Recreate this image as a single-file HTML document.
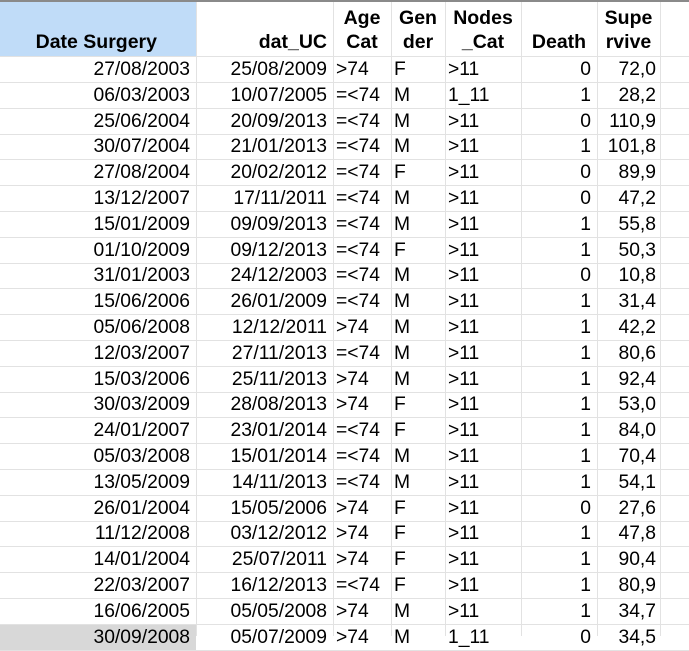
<!DOCTYPE html>
<html><head><meta charset="utf-8"><style>
body{margin:0;width:689px;height:636px;overflow:hidden;background:#fff;font-family:"Liberation Sans",Arial,sans-serif;position:relative}
.top{position:absolute;left:0;top:0;width:689px;height:2px;background:#8a8a8a}
.row{position:absolute;left:0;width:689px;height:26px;border-bottom:1px solid #e2e2e2;box-sizing:border-box}
.c{position:absolute;top:0;height:100%;font-size:19.3px;line-height:25px;white-space:nowrap;box-sizing:border-box;color:#000}
.vl{position:absolute;top:2px;bottom:0;width:1px;background:#e2e2e2}
.r{text-align:right;padding-right:6px}
.l{padding-left:3px}
.h{font-weight:bold;font-size:19.5px;line-height:24px;position:absolute;top:4px;height:52px;display:flex;flex-direction:column;justify-content:flex-end;padding-bottom:2px;box-sizing:border-box}
</style></head><body>
<div class="top"></div>
<div style="position:absolute;left:0;top:2px;width:196px;height:55px;background:#c0dcf8"></div>
<div style="position:absolute;left:0;top:56px;width:689px;height:1px;background:#e2e2e2"></div>
<div class="vl" style="left:196px"></div><div class="vl" style="left:333px"></div><div class="vl" style="left:391px"></div><div class="vl" style="left:445px"></div><div class="vl" style="left:521px"></div><div class="vl" style="left:597px"></div><div class="vl" style="left:660px"></div>
<div class="h" style="left:0;width:190px;text-align:right;align-items:flex-end;padding-right:33px"><div>Date Surgery</div></div>
<div class="h" style="left:196px;width:131px;align-items:flex-end"><div>dat_UC</div></div>
<div class="h" style="left:333px;width:58px;align-items:center;text-align:center"><div>Age</div><div>Cat</div></div>
<div class="h" style="left:391px;width:54px;align-items:center;text-align:center"><div>Gen</div><div>der</div></div>
<div class="h" style="left:445px;width:76px;align-items:center;text-align:center"><div>Nodes</div><div>_Cat</div></div>
<div class="h" style="left:521px;width:76px;align-items:center"><div>Death</div></div>
<div class="h" style="left:597px;width:63px;align-items:center"><div>Supe</div><div>rvive</div></div>
<div id="rows"></div>
<script>
var d=[["27/08/2003","25/08/2009",">74","F",">11","0","72,0"],
["06/03/2003","10/07/2005","=<74","M","1_11","1","28,2"],
["25/06/2004","20/09/2013","=<74","M",">11","0","110,9"],
["30/07/2004","21/01/2013","=<74","M",">11","1","101,8"],
["27/08/2004","20/02/2012","=<74","F",">11","0","89,9"],
["13/12/2007","17/11/2011","=<74","M",">11","0","47,2"],
["15/01/2009","09/09/2013","=<74","M",">11","1","55,8"],
["01/10/2009","09/12/2013","=<74","F",">11","1","50,3"],
["31/01/2003","24/12/2003","=<74","M",">11","0","10,8"],
["15/06/2006","26/01/2009","=<74","M",">11","1","31,4"],
["05/06/2008","12/12/2011",">74","M",">11","1","42,2"],
["12/03/2007","27/11/2013","=<74","M",">11","1","80,6"],
["15/03/2006","25/11/2013",">74","M",">11","1","92,4"],
["30/03/2009","28/08/2013",">74","F",">11","1","53,0"],
["24/01/2007","23/01/2014","=<74","F",">11","1","84,0"],
["05/03/2008","15/01/2014","=<74","M",">11","1","70,4"],
["13/05/2009","14/11/2013","=<74","M",">11","1","54,1"],
["26/01/2004","15/05/2006",">74","F",">11","0","27,6"],
["11/12/2008","03/12/2012",">74","F",">11","1","47,8"],
["14/01/2004","25/07/2011",">74","F",">11","1","90,4"],
["22/03/2007","16/12/2013","=<74","F",">11","1","80,9"],
["16/06/2005","05/05/2008",">74","M",">11","1","34,7"],
["30/09/2008","05/07/2009",">74","M","1_11","0","34,5"]];
var h="";
d.forEach(function(r,i){
var t=57+i*25.8;
h+='<div class="row" style="top:'+t+'px">'+(i==22?'<div style="position:absolute;left:0;top:0;width:196px;height:100%;background:#d8d8d8"></div>':'')+
'<div class="c r" style="left:0;width:196px">'+r[0]+'</div>'+
'<div class="c r" style="left:196px;width:137px">'+r[1]+'</div>'+
'<div class="c l" style="left:333px;width:58px">'+r[2].replace("<","&lt;").replace(">","&gt;")+'</div>'+
'<div class="c l" style="left:391px;width:54px">'+r[3]+'</div>'+
'<div class="c l" style="left:445px;width:76px">'+r[4].replace(">","&gt;")+'</div>'+
'<div class="c r" style="left:521px;width:76px">'+r[5]+'</div>'+
'<div class="c r" style="left:597px;width:63px;padding-right:4px">'+r[6]+'</div></div>';
});
document.getElementById("rows").innerHTML=h;
</script>
</body></html>
